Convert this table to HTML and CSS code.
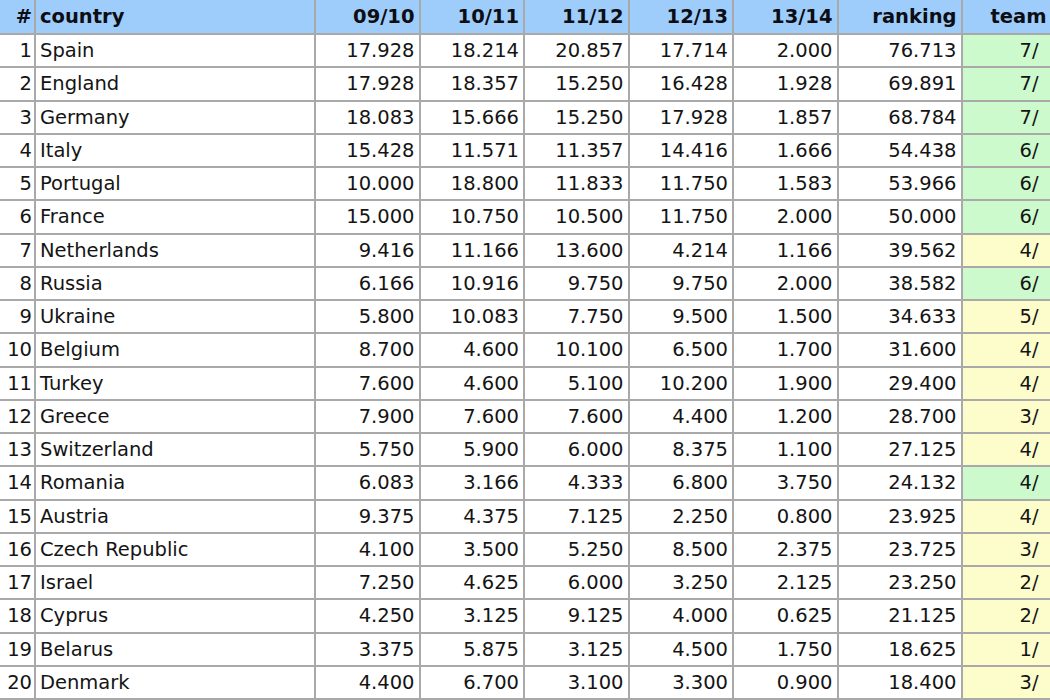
FILE: index.html
```html
<!DOCTYPE html>
<html>
<head>
<meta charset="utf-8">
<link rel="stylesheet" href="styles.css">
</head>
<body>
<table class="rank">
<colgroup>
<col class="c-num"><col class="c-country"><col class="c-season"><col class="c-season"><col class="c-season"><col class="c-season"><col class="c-season"><col class="c-rank"><col class="c-team">
</colgroup>
<thead>
<tr><th class="num">#</th><th class="country">country</th><th>09/10</th><th>10/11</th><th>11/12</th><th>12/13</th><th>13/14</th><th>ranking</th><th class="team">team</th></tr>
</thead>
<tbody>
<tr><td class="num">1</td><td class="country">Spain</td><td>17.928</td><td>18.214</td><td>20.857</td><td>17.714</td><td>2.000</td><td>76.713</td><td class="team g">7/</td></tr>
<tr><td class="num">2</td><td class="country">England</td><td>17.928</td><td>18.357</td><td>15.250</td><td>16.428</td><td>1.928</td><td>69.891</td><td class="team g">7/</td></tr>
<tr><td class="num">3</td><td class="country">Germany</td><td>18.083</td><td>15.666</td><td>15.250</td><td>17.928</td><td>1.857</td><td>68.784</td><td class="team g">7/</td></tr>
<tr><td class="num">4</td><td class="country">Italy</td><td>15.428</td><td>11.571</td><td>11.357</td><td>14.416</td><td>1.666</td><td>54.438</td><td class="team g">6/</td></tr>
<tr><td class="num">5</td><td class="country">Portugal</td><td>10.000</td><td>18.800</td><td>11.833</td><td>11.750</td><td>1.583</td><td>53.966</td><td class="team g">6/</td></tr>
<tr><td class="num">6</td><td class="country">France</td><td>15.000</td><td>10.750</td><td>10.500</td><td>11.750</td><td>2.000</td><td>50.000</td><td class="team g">6/</td></tr>
<tr><td class="num">7</td><td class="country">Netherlands</td><td>9.416</td><td>11.166</td><td>13.600</td><td>4.214</td><td>1.166</td><td>39.562</td><td class="team y">4/</td></tr>
<tr><td class="num">8</td><td class="country">Russia</td><td>6.166</td><td>10.916</td><td>9.750</td><td>9.750</td><td>2.000</td><td>38.582</td><td class="team g">6/</td></tr>
<tr><td class="num">9</td><td class="country">Ukraine</td><td>5.800</td><td>10.083</td><td>7.750</td><td>9.500</td><td>1.500</td><td>34.633</td><td class="team y">5/</td></tr>
<tr><td class="num">10</td><td class="country">Belgium</td><td>8.700</td><td>4.600</td><td>10.100</td><td>6.500</td><td>1.700</td><td>31.600</td><td class="team y">4/</td></tr>
<tr><td class="num">11</td><td class="country">Turkey</td><td>7.600</td><td>4.600</td><td>5.100</td><td>10.200</td><td>1.900</td><td>29.400</td><td class="team y">4/</td></tr>
<tr><td class="num">12</td><td class="country">Greece</td><td>7.900</td><td>7.600</td><td>7.600</td><td>4.400</td><td>1.200</td><td>28.700</td><td class="team y">3/</td></tr>
<tr><td class="num">13</td><td class="country">Switzerland</td><td>5.750</td><td>5.900</td><td>6.000</td><td>8.375</td><td>1.100</td><td>27.125</td><td class="team y">4/</td></tr>
<tr><td class="num">14</td><td class="country">Romania</td><td>6.083</td><td>3.166</td><td>4.333</td><td>6.800</td><td>3.750</td><td>24.132</td><td class="team g">4/</td></tr>
<tr><td class="num">15</td><td class="country">Austria</td><td>9.375</td><td>4.375</td><td>7.125</td><td>2.250</td><td>0.800</td><td>23.925</td><td class="team y">4/</td></tr>
<tr><td class="num">16</td><td class="country">Czech Republic</td><td>4.100</td><td>3.500</td><td>5.250</td><td>8.500</td><td>2.375</td><td>23.725</td><td class="team y">3/</td></tr>
<tr><td class="num">17</td><td class="country">Israel</td><td>7.250</td><td>4.625</td><td>6.000</td><td>3.250</td><td>2.125</td><td>23.250</td><td class="team y">2/</td></tr>
<tr><td class="num">18</td><td class="country">Cyprus</td><td>4.250</td><td>3.125</td><td>9.125</td><td>4.000</td><td>0.625</td><td>21.125</td><td class="team y">2/</td></tr>
<tr><td class="num">19</td><td class="country">Belarus</td><td>3.375</td><td>5.875</td><td>3.125</td><td>4.500</td><td>1.750</td><td>18.625</td><td class="team y">1/</td></tr>
<tr><td class="num">20</td><td class="country">Denmark</td><td>4.400</td><td>6.700</td><td>3.100</td><td>3.300</td><td>0.900</td><td>18.400</td><td class="team y">3/</td></tr>
<tr class="tail"><td class="num"></td><td class="country"></td><td></td><td></td><td></td><td></td><td></td><td></td><td class="team"></td></tr>
</tbody>
</table>
</body>
</html>
```
FILE: styles.css
```css
html, body {
  margin: 0;
  padding: 0;
  background: #ffffff;
  overflow: hidden;
}

.rank {
  border-collapse: collapse;
  table-layout: fixed;
  width: 1100px;
  font-family: "DejaVu Sans", Verdana, sans-serif;
  font-size: 19.5px;
  color: #141414;
}

.c-num { width: 35px; }
.c-country { width: 280px; }
.c-season { width: 104.5px; }
.c-rank { width: 124px; }
.c-team { width: 139px; }

.rank th,
.rank td {
  border: 2px solid #a9a9a9;
  padding: 0 4px;
  text-align: right;
  white-space: nowrap;
  overflow: hidden;
}

.rank th {
  background: #9ecdfc;
  font-weight: bold;
  color: #0d0d14;
  height: 33px;
  border-top: none;
}

.rank td {
  height: 31.26px;
}

.rank .num {
  border-left: none;
  padding: 0 2px 0 0;
}

.rank .country {
  text-align: left;
  padding-left: 4px;
}

.rank th.team {
  text-align: left;
  padding-left: 28px;
}

.rank td.team {
  text-align: left;
  padding-left: 57px;
}

.rank td.g { background: #ccfacc; }
.rank td.y { background: #fdfdcc; }
```
